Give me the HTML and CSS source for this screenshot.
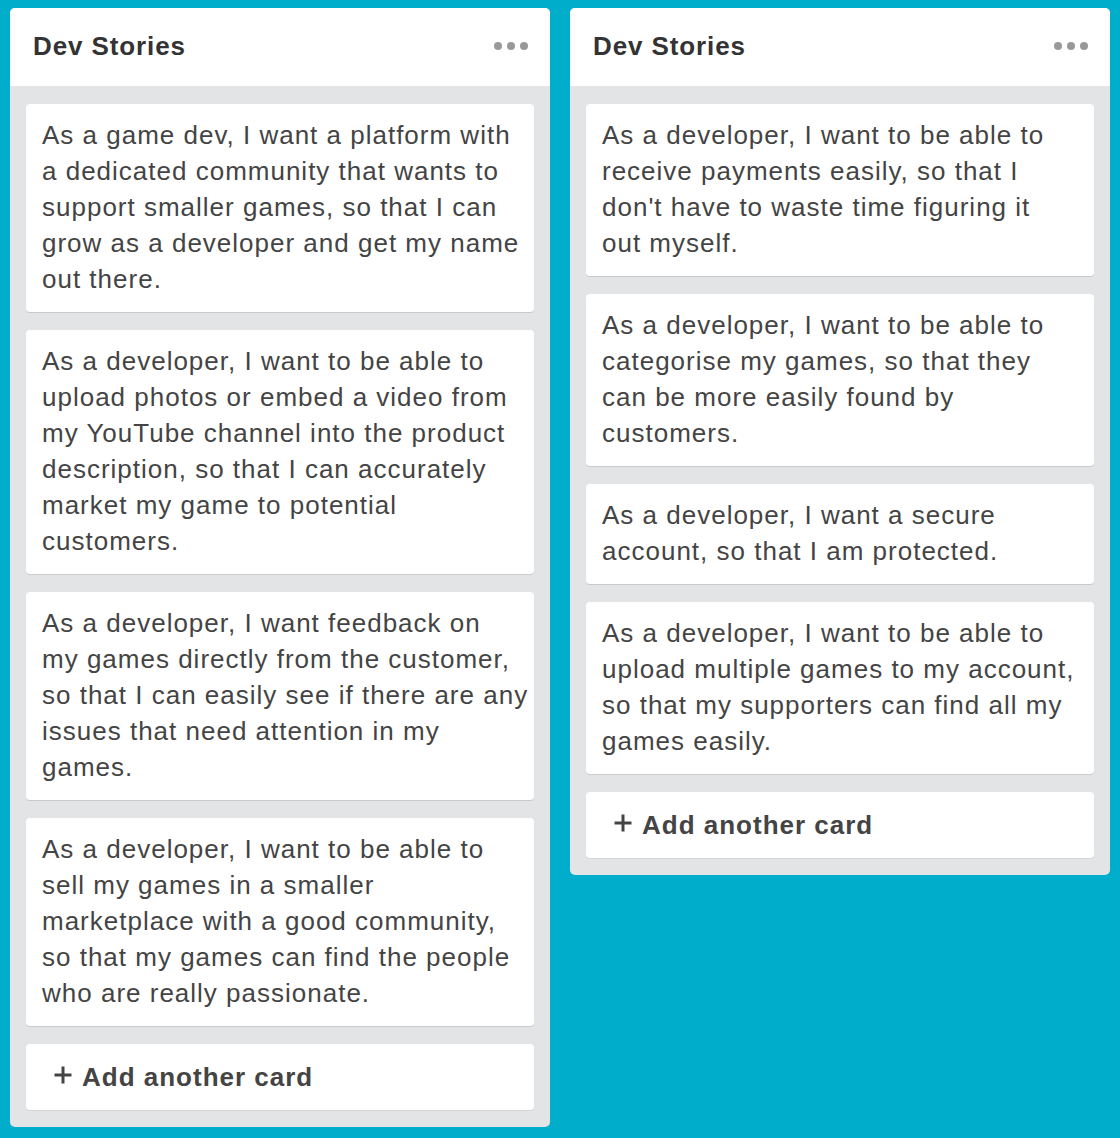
FILE: index.html
```html
<!DOCTYPE html>
<html lang="en">
<head>
<meta charset="utf-8">
<title>Dev Stories</title>
<link rel="stylesheet" href="styles.css">
</head>
<body>
<div class="board">
  <section class="list">
    <header class="list-header">
      <h2 class="list-title">Dev Stories</h2>
      <span class="list-menu"><i></i><i></i><i></i></span>
    </header>
    <div class="list-body">
      <div class="card">As a game dev, I want a platform with<br>a dedicated community that wants to<br>support smaller games, so that I can<br>grow as a developer and get my name<br>out there.</div>
      <div class="card">As a developer, I want to be able to<br>upload photos or embed a video from<br>my YouTube channel into the product<br>description, so that I can accurately<br>market my game to potential<br>customers.</div>
      <div class="card">As a developer, I want feedback on<br>my games directly from the customer,<br>so that I can easily see if there are any<br>issues that need attention in my<br>games.</div>
      <div class="card">As a developer, I want to be able to<br>sell my games in a smaller<br>marketplace with a good community,<br>so that my games can find the people<br>who are really passionate.</div>
      <div class="add-card"><svg class="plus" width="18" height="18" viewBox="0 0 18 18" aria-hidden="true"><path d="M9 0.5v17M0.5 9h17" stroke="#444" stroke-width="3" fill="none"/></svg>Add another card</div>
    </div>
  </section>
  <section class="list">
    <header class="list-header">
      <h2 class="list-title">Dev Stories</h2>
      <span class="list-menu"><i></i><i></i><i></i></span>
    </header>
    <div class="list-body">
      <div class="card">As a developer, I want to be able to<br>receive payments easily, so that I<br>don't have to waste time figuring it<br>out myself.</div>
      <div class="card">As a developer, I want to be able to<br>categorise my games, so that they<br>can be more easily found by<br>customers.</div>
      <div class="card">As a developer, I want a secure<br>account, so that I am protected.</div>
      <div class="card">As a developer, I want to be able to<br>upload multiple games to my account,<br>so that my supporters can find all my<br>games easily.</div>
      <div class="add-card"><svg class="plus" width="18" height="18" viewBox="0 0 18 18" aria-hidden="true"><path d="M9 0.5v17M0.5 9h17" stroke="#444" stroke-width="3" fill="none"/></svg>Add another card</div>
    </div>
  </section>
</div>
</body>
</html>
```
FILE: styles.css
```css
html, body {
  margin: 0;
  padding: 0;
  background: #00aecc;
  font-family: "Liberation Sans", Arial, Helvetica, sans-serif;
}
.board {
  display: flex;
  align-items: flex-start;
  gap: 20px;
  padding: 8px 10px;
}
.list {
  width: 540px;
  border-radius: 5px;
  overflow: hidden;
  background: #e2e4e6;
}
.list-header {
  height: 76px;
  padding: 0 22px 2px 23px;
  background: #fff;
  display: flex;
  align-items: center;
  justify-content: space-between;
}
.list-title {
  margin: 0;
  font-size: 26px;
  font-weight: bold;
  letter-spacing: 0.9px;
  color: #333;
}
.list-menu {
  display: flex;
  gap: 5px;
}
.list-menu i {
  width: 8px;
  height: 8px;
  border-radius: 50%;
  background: #999;
}
.list-body {
  display: flex;
  flex-direction: column;
  gap: 18px;
  padding: 18px 16px 17px;
}
.card {
  background: #fff;
  border-radius: 4px;
  box-shadow: 0 1px 0 #c8cacc;
  padding: 13px 8px 15px 16px;
  font-size: 26px;
  line-height: 36px;
  letter-spacing: 1px;
  white-space: nowrap;
  color: #444;
}
.add-card {
  background: #fff;
  border-radius: 4px;
  box-shadow: 0 1px 0 #d4d6d8;
  height: 66px;
  display: flex;
  align-items: center;
  padding-left: 28px;
  font-size: 26px;
  font-weight: bold;
  letter-spacing: 1px;
  color: #444;
}
.plus {
  margin: 0 10px 4px 0;
  flex: none;
}
```
